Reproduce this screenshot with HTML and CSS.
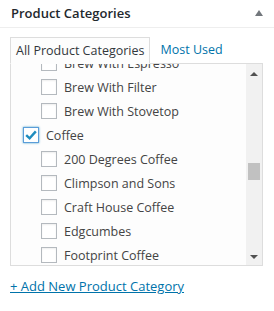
FILE: index.html
```html
<!DOCTYPE html>
<html>
<head>
<meta charset="utf-8">
<link rel="stylesheet" href="styles.css">
</head>
<body>
<div class="postbox">
  <div class="hndle">
    <h2>Product Categories</h2>
    <span class="toggle"></span>
  </div>
  <div class="inside">
    <ul class="tabs">
      <li class="tab active">All Product Categories</li>
      <li class="tab"><a>Most Used</a></li>
    </ul>
    <div class="panel">
      <ul class="checklist">
        <li class="row child"><span class="cb"></span><span>Brew With Espresso</span></li>
        <li class="row child"><span class="cb"></span><span>Brew With Filter</span></li>
        <li class="row child"><span class="cb"></span><span>Brew With Stovetop</span></li>
        <li class="row"><span class="cb checked"><svg viewBox="0 0 16 16" width="16" height="16"><path d="M3.2 8.2 L6.6 11.4 L12.8 4.4" fill="none" stroke="#1e8cbe" stroke-width="2.4"/></svg></span><span>Coffee</span></li>
        <li class="row child"><span class="cb"></span><span>200 Degrees Coffee</span></li>
        <li class="row child"><span class="cb"></span><span>Climpson and Sons</span></li>
        <li class="row child"><span class="cb"></span><span>Craft House Coffee</span></li>
        <li class="row child"><span class="cb"></span><span>Edgcumbes</span></li>
        <li class="row child"><span class="cb"></span><span>Footprint Coffee</span></li>
      </ul>
      <div class="scrollbar">
        <span class="arrow up"></span>
        <span class="thumb"></span>
        <span class="arrow down"></span>
      </div>
    </div>
    <a class="add-new">+ Add New Product Category</a>
  </div>
</div>
</body>
</html>
```
FILE: styles.css
```css
* { box-sizing: border-box; }
html, body { margin: 0; padding: 0; background: #fff; }
body {
  width: 274px;
  height: 311px;
  overflow: hidden;
  font-family: "Open Sans", "Noto Sans", sans-serif;
  font-size: 12.5px;
  color: #32373c;
}
.postbox { width: 274px; }
.hndle {
  height: 28px;
  border-bottom: 1px solid #eee;
  display: flex;
  align-items: center;
  justify-content: space-between;
  padding: 0 11px 1px 11px;
}
.hndle h2 {
  margin: 0;
  font-size: 13px;
  font-weight: 600;
  color: #23282d;
  line-height: 1;
}
.toggle {
  width: 0; height: 0;
  border-left: 4px solid transparent;
  border-right: 4px solid transparent;
  border-bottom: 6px solid #72777c;
}
.inside { padding: 9px 11px 0 10px; }
.tabs {
  list-style: none;
  margin: 0;
  padding: 0;
  display: flex;
  height: 27px;
}
.tab {
  padding: 3px 5px 0 5px;
  line-height: 20px;
  white-space: nowrap;
}
.tab.active {
  border: 1px solid #ddd;
  border-bottom-color: #fdfdfd;
  background: #fdfdfd;
  position: relative;
  z-index: 1;
  height: 27px;
}
.tab a { color: #0073aa; padding-left: 5px; }
.panel {
  position: relative;
  margin-top: -1px;
  height: 203px;
  border: 1px solid #ddd;
  background: #fdfdfd;
  overflow: hidden;
}
.checklist {
  list-style: none;
  margin: -13px 0 0 0;
  padding: 0 0 0 12px;
}
.row {
  height: 24px;
  display: flex;
  align-items: center;
  gap: 7px;
  color: #444;
  white-space: nowrap;
}
.row.child { padding-left: 18px; }
.cb {
  flex: none;
  width: 16px;
  height: 16px;
  border: 1px solid #b4b9be;
  background: #fff;
  box-shadow: inset 0 1px 2px rgba(0,0,0,.07);
  display: flex;
}
.cb.checked {
  border-color: #5b9dd9;
  box-shadow: 0 0 2px rgba(30,140,190,.8);
}
.cb svg { margin: -1px; }
.scrollbar {
  position: absolute;
  top: 0; right: 0; bottom: 0;
  width: 16px;
  background: #f1f1f1;
}
.thumb {
  position: absolute;
  left: 2px; right: 2px;
  top: 99px;
  height: 17px;
  background: #c1c1c1;
}
.arrow {
  position: absolute;
  left: 4px;
  width: 0; height: 0;
  border-left: 4px solid transparent;
  border-right: 4px solid transparent;
}
.arrow.up { top: 8px; border-bottom: 4px solid #505050; }
.arrow.down { bottom: 6px; border-top: 4px solid #505050; }
.add-new {
  display: inline-block;
  margin-top: 11px;
  font-size: 13px;
  color: #0073aa;
  text-decoration: underline;
  line-height: 18px;
}
```
